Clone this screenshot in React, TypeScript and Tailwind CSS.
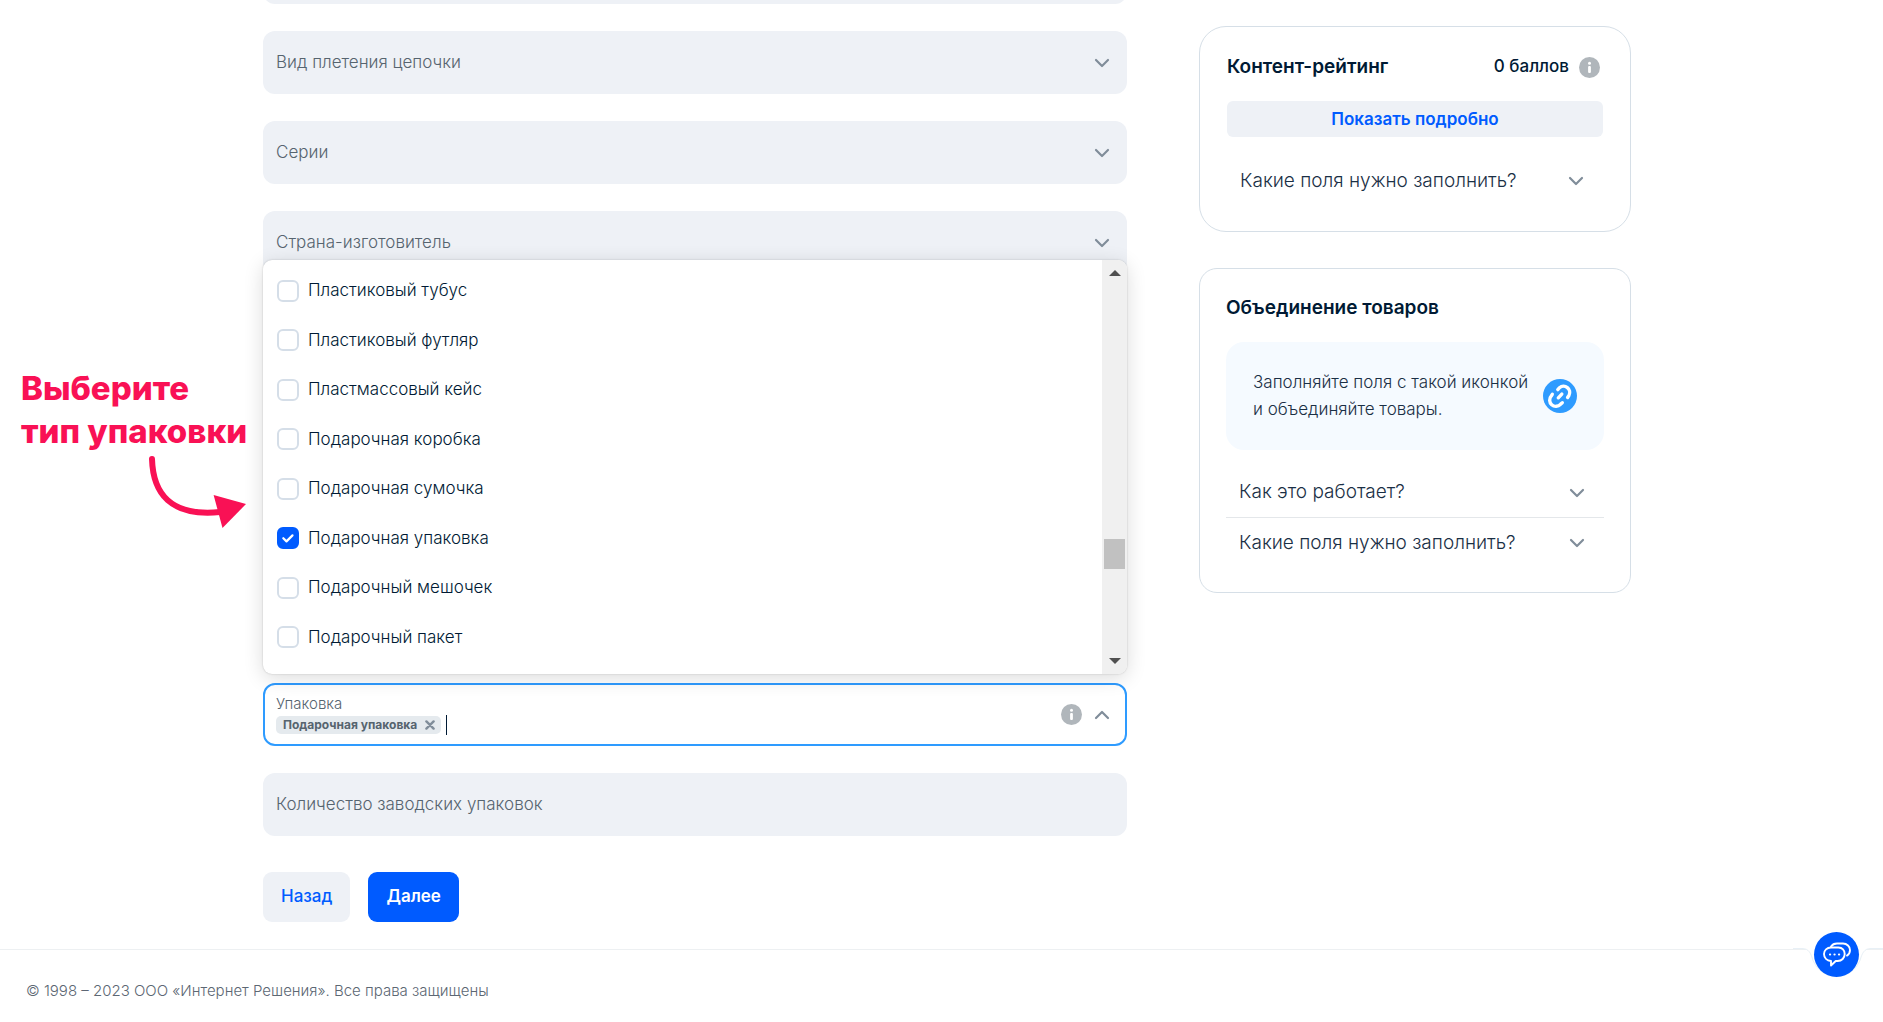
import { useState } from "react";
import type { ReactNode } from "react";

const PACKAGING = [
  "Пластиковый тубус",
  "Пластиковый футляр",
  "Пластмассовый кейс",
  "Подарочная коробка",
  "Подарочная сумочка",
  "Подарочная упаковка",
  "Подарочный мешочек",
  "Подарочный пакет",
];

function Chevron({ up = false }: { up?: boolean }) {
  return (
    <svg
      viewBox="0 0 16 10"
      className="pointer-events-none h-2.5 w-4 shrink-0"
      fill="none"
      stroke="#808d9a"
      strokeWidth="2.2"
      strokeLinecap="round"
      strokeLinejoin="round"
      aria-hidden="true"
    >
      <path d={up ? "M2 8l6-6 6 6" : "M2 2l6 6 6-6"} />
    </svg>
  );
}

function InfoIcon() {
  return (
    <svg viewBox="0 0 21 21" className="h-[21px] w-[21px] shrink-0" aria-hidden="true">
      <circle cx="10.5" cy="10.5" r="10.5" fill="#b0b6bb" />
      <circle cx="10.5" cy="6.3" r="1.5" fill="#fff" />
      <rect x="9.1" y="9" width="2.8" height="7" rx="1" fill="#fff" />
    </svg>
  );
}

function LinkIcon() {
  return (
    <svg viewBox="0 0 34 34" className="h-[34px] w-[34px] shrink-0" aria-hidden="true">
      <circle cx="17" cy="17" r="17" fill="#2e9bff" />
      <g fill="none" stroke="#fff" strokeWidth="3.4" strokeLinecap="round">
        <path d="M14.8 10.6l1.7-1.9a6.2 6.2 0 0 1 9.5 7.6l-1.4 2.2" />
        <path d="M9.3 15.3l-1 1.6a6.2 6.2 0 0 0 9.2 8.4l1.8-1.6" />
        <path d="M15.3 18.8l3.5-3.7" />
      </g>
    </svg>
  );
}

function SelectField({ label }: { label: string }) {
  return (
    <label className="flex h-[63px] items-center rounded-xl bg-[#eef1f6] pr-[17px]">
      <select
        aria-label={label}
        className="h-full min-w-0 flex-1 appearance-none bg-transparent pl-[13px] text-[17px] font-light text-[#56646f] outline-none"
      >
        <option>{label}</option>
      </select>
      <Chevron />
    </label>
  );
}

function Question({ children }: { children: ReactNode }) {
  return (
    <button className="flex h-[50px] w-full items-center justify-between pr-[19px] pl-[13px] text-left text-[19px] font-light text-[#1a2f45]">
      {children}
      <Chevron />
    </button>
  );
}

function PackagingList({
  selected,
  onToggle,
}: {
  selected: string[];
  onToggle: (name: string) => void;
}) {
  return (
    <div className="absolute inset-x-0 bottom-full z-10 mb-[9px] flex overflow-hidden rounded-[9px] bg-white shadow-[0_0_2px_rgba(0,0,0,0.2),0_4px_20px_rgba(0,0,0,0.14)]">
      <ul className="grid h-[414px] flex-1 grid-rows-8 pt-1.5 pb-3">
        {PACKAGING.map((name) => (
          <li key={name} className="flex items-center">
            <label className="flex items-center gap-[9px] pl-3.5 text-[17px] font-light text-[#001a34]">
              <span className="grid">
                <input
                  type="checkbox"
                  checked={selected.includes(name)}
                  onChange={() => onToggle(name)}
                  className="peer col-start-1 row-start-1 h-[22px] w-[22px] appearance-none rounded-md border-2 border-[#d5dee8] bg-white checked:border-[#005bff] checked:bg-[#005bff]"
                />
                <svg
                  viewBox="0 0 22 22"
                  className="pointer-events-none col-start-1 row-start-1 hidden h-[22px] w-[22px] peer-checked:block"
                  fill="none"
                  stroke="#fff"
                  strokeWidth="2.2"
                  strokeLinecap="round"
                  strokeLinejoin="round"
                  aria-hidden="true"
                >
                  <path d="M6.3 11.2l3.2 3.2 6-6" />
                </svg>
              </span>
              {name}
            </label>
          </li>
        ))}
      </ul>

      {/* Scrollbar */}
      <div className="flex w-[25px] flex-col items-center bg-[#f0f0f0] py-2.5" aria-hidden="true">
        <svg viewBox="0 0 12 6" className="h-1.5 w-3" fill="#505050">
          <path d="M0 6l6-6 6 6z" />
        </svg>
        <div className="mt-[263px] h-[30px] w-[21px] bg-[#c1c1c1]" />
        <svg viewBox="0 0 12 6" className="mt-auto h-1.5 w-3" fill="#505050">
          <path d="M0 0l6 6 6-6z" />
        </svg>
      </div>
    </div>
  );
}

export default function App() {
  const [selected, setSelected] = useState<string[]>(["Подарочная упаковка"]);

  const toggle = (name: string) =>
    setSelected((list) =>
      list.includes(name) ? list.filter((n) => n !== name) : [...list, name],
    );

  return (
    <div className="relative min-h-screen bg-white font-['Inter',sans-serif] text-[#001a34]">
      <div className="flex pr-[252px]">
        {/* Hint */}
        <div className="w-[263px] shrink-0 pt-[367px] pl-[21px] text-[#f91155]">
          <p className="text-[33px] leading-[43px] font-extrabold whitespace-nowrap">
            Выберите
            <br />
            тип упаковки
          </p>
          <svg viewBox="0 0 100 76" className="ml-[127px] h-[76px] w-[100px]" aria-hidden="true">
            <path
              d="M4 6C5 40 22 64 72 59"
              fill="none"
              stroke="currentColor"
              strokeWidth="6"
              strokeLinecap="round"
            />
            <path d="M65.6 42L98 51 74.5 75z" fill="currentColor" />
          </svg>
        </div>

        {/* Form */}
        <form className="min-w-0 flex-1" onSubmit={(e) => e.preventDefault()}>
          <div className="flex h-1 items-end overflow-hidden">
            <div className="h-[63px] w-full shrink-0 rounded-xl bg-[#eef1f6]" />
          </div>
          <div className="mt-[27px] flex flex-col gap-[27px]">
            <SelectField label="Вид плетения цепочки" />
            <SelectField label="Серии" />
            <SelectField label="Страна-изготовитель" />
          </div>

          <div className="relative mt-[409px]">
            <PackagingList selected={selected} onToggle={toggle} />
            <div className="flex h-[63px] items-center gap-3 rounded-xl border-2 border-[#2e9bff] bg-white pr-[15px] pl-[11px]">
              <div className="min-w-0 flex-1">
                <label htmlFor="packaging" className="block pb-0.5 text-[15px] leading-[18px] font-light text-[#56646f]">
                  Упаковка
                </label>
                <div className="flex h-5 items-center gap-[5px]">
                  {selected.map((name) => (
                    <span
                      key={name}
                      className="flex h-[18px] items-center gap-2 rounded-[5px] bg-[#e5eaee] pr-1.5 pl-[7px] text-[12px] font-bold whitespace-nowrap text-[#56646f]"
                    >
                      {name}
                      <button type="button" aria-label="Удалить" onClick={() => toggle(name)}>
                        <svg
                          viewBox="0 0 10 10"
                          className="h-2.5 w-2.5"
                          stroke="#808d9a"
                          strokeWidth="2.4"
                          strokeLinecap="round"
                          aria-hidden="true"
                        >
                          <path d="M1.4 1.4l7.2 7.2M8.6 1.4L1.4 8.6" />
                        </svg>
                      </button>
                    </span>
                  ))}
                  <input
                    id="packaging"
                    className="h-5 min-w-0 flex-1 border-l border-[#001a34] bg-transparent text-[17px] caret-transparent outline-none"
                  />
                </div>
              </div>
              <InfoIcon />
              <Chevron up />
            </div>
          </div>

          <input
            aria-label="Количество заводских упаковок"
            placeholder="Количество заводских упаковок"
            className="mt-[27px] block h-[63px] w-full rounded-xl bg-[#eef1f6] px-[13px] pb-0.5 text-[17px] font-light outline-none placeholder:text-[#56646f]"
          />

          <div className="mt-9 flex gap-[18px] text-[17px]">
            <button className="h-[50px] rounded-[9px] bg-[#eef1f6] px-[18px] font-medium text-[#005bff]">
              Назад
            </button>
            <button className="h-[50px] rounded-[9px] bg-[#005bff] px-[18px] font-semibold text-white">
              Далее
            </button>
          </div>
        </form>

        {/* Sidebar */}
        <aside className="ml-[72px] w-[432px] shrink-0 pt-[26px]">
          <section className="h-[206px] rounded-[27px] border border-[#d6dfe7] px-[27px] pt-[27px]">
            <div className="flex h-[26px] items-center justify-between">
              <h2 className="text-[19px] font-semibold">Контент-рейтинг</h2>
              <p className="flex items-center gap-2.5 pr-[3px] text-[17px] font-medium">
                0 баллов
                <InfoIcon />
              </p>
            </div>
            <button className="mt-[21px] h-9 w-full rounded-md bg-[#eef1f6] pt-px text-[17px] font-semibold text-[#005bff]">
              Показать подробно
            </button>
            <div className="mt-[19px]">
              <Question>Какие поля нужно заполнить?</Question>
            </div>
          </section>

          <section className="mt-9 h-[325px] rounded-[18px] border border-[#d6dfe7] px-[26px] pt-[26px]">
            <h2 className="text-[19px] leading-[26px] font-semibold">Объединение товаров</h2>
            <div className="mt-[21px] flex h-[108px] items-center justify-between rounded-[18px] bg-[#f5faff] px-[27px]">
              <p className="text-[17px] leading-[27px] font-light whitespace-nowrap text-[#1a2f45]">
                Заполняйте поля с такой иконкой
                <br />и объединяйте товары.
              </p>
              <LinkIcon />
            </div>
            <div className="mt-[18px] divide-y divide-[#e4e7ea]">
              <Question>Как это работает?</Question>
              <Question>Какие поля нужно заполнить?</Question>
            </div>
          </section>
        </aside>
      </div>

      {/* Footer */}
      <footer className="mt-[27px] flex h-[73px] items-center border-t border-[#edf0f2] pt-2.5 pl-[26px] text-[15px] font-light text-[#5c6773]">
        © 1998 – 2023 ООО «Интернет Решения». Все права защищены
      </footer>

      {/* Chat */}
      <svg
        viewBox="0 0 90 44"
        className="absolute right-0 bottom-[38px] h-11 w-[90px]"
        fill="#fff"
        aria-hidden="true"
      >
        <path
          d="M0 8.500h9c7 0 9 5 11 12a25.200 25.200 0 0 0 47 0c2-7 4-12 11-12h12"
          stroke="#e8f0f6"
        />
      </svg>
      <button
        aria-label="Чат"
        className="absolute right-6 bottom-[45px] flex h-[45px] w-[45px] items-center justify-center rounded-full bg-[#005bff]"
      >
        <svg
          viewBox="0 0 28 26"
          className="h-[26px] w-7"
          fill="none"
          stroke="#fff"
          strokeWidth="1.9"
          strokeLinecap="round"
          strokeLinejoin="round"
          aria-hidden="true"
        >
          <path d="M8 4.500C9.500 2.300 11.500 1.500 14 1.500h6c4 0 7 3 7 6.500 0 2.500-1.200 4.500-3 5.600" />
          <path d="M12 5.500h3.500c3.800 0 6.200 3 6.200 6.500 0 4-3 7-7 7h-2L8 23.500V19c-4-.5-7-3.200-7-7 0-3.700 3-6.500 7-6.500h4z" />
          <path d="M7 12.500h.1M11.500 12.500h.1M16 12.500h.1" strokeWidth="2.2" />
        </svg>
      </button>
    </div>
  );
}
